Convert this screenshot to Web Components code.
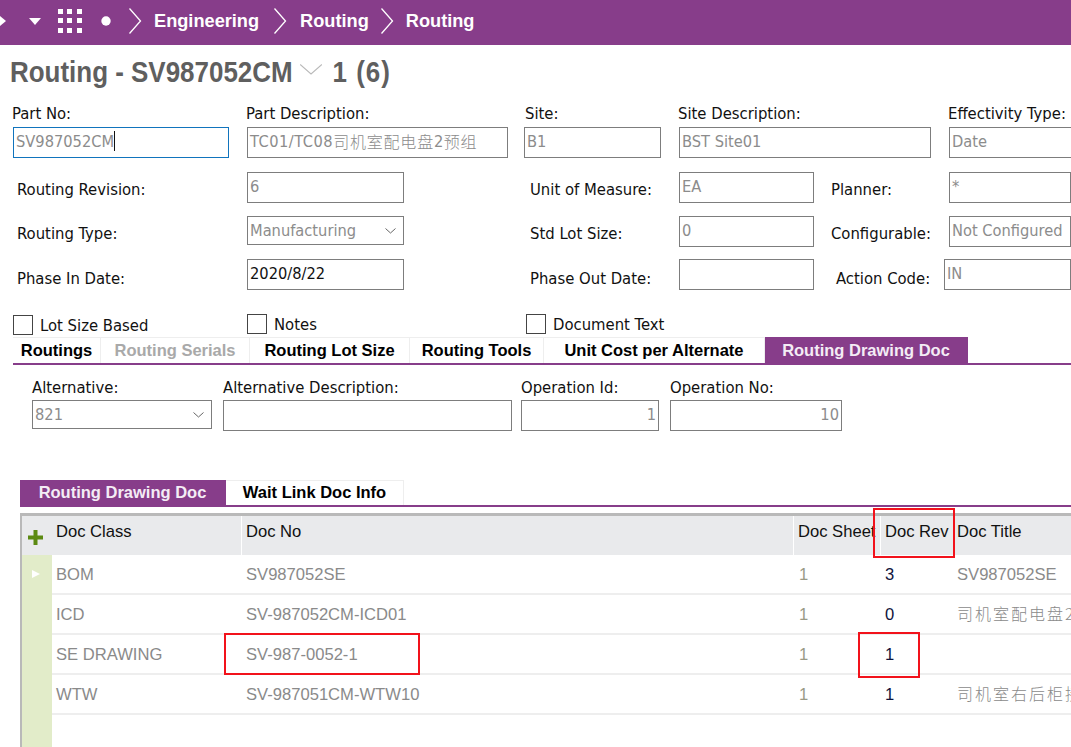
<!DOCTYPE html>
<html>
<head>
<meta charset="utf-8">
<title>Routing</title>
<style>
  html, body { margin: 0; padding: 0; background: #fff; }
  body { width: 1071px; height: 747px; overflow: hidden; font-family: "DejaVu Sans Condensed", "DejaVu Sans", "Noto Sans CJK SC", sans-serif; }
  .sheet { display: block; }
</style>
</head>
<body>
<div class="sheet">
  <app-header></app-header>
  <page-title></page-title>

  <form-row cols="234px 277px 155px 270px 200px" style="--label-gap:3px">
    <form-field label="Part No:" value="SV987052CM" focus label-x="-1" style="margin-right:18px"></form-field>
    <form-field label="Part Description:" value="TC01/TC08司机室配电盘2预组" label-x="-1" style="margin-right:16px"></form-field>
    <form-field label="Site:" value="B1" label-x="1" style="margin-right:18px"></form-field>
    <form-field label="Site Description:" value="BST Site01" label-x="-1" style="margin-right:18px"></form-field>
    <form-field label="Effectivity Type:" value="Date" label-x="-1"></form-field>
  </form-row>

  <form-grid>
    <field-label style="padding-left:17px">Routing Revision:</field-label>
    <text-box value="6"></text-box>
    <field-label style="padding-left:126px">Unit of Measure:</field-label>
    <text-box value="EA"></text-box>
    <field-label style="padding-left:17px">Planner:</field-label>
    <text-box value="*"></text-box>

    <field-label style="padding-left:17px">Routing Type:</field-label>
    <text-box value="Manufacturing" select h="29"></text-box>
    <field-label style="padding-left:126px">Std Lot Size:</field-label>
    <text-box value="0"></text-box>
    <field-label style="padding-left:17px">Configurable:</field-label>
    <text-box value="Not Configured"></text-box>

    <field-label style="padding-left:17px;--label-pad:9px">Phase In Date:</field-label>
    <text-box value="2020/8/22" dark></text-box>
    <field-label style="padding-left:126px;--label-pad:9px">Phase Out Date:</field-label>
    <text-box value=""></text-box>
    <field-label style="padding-left:22px;--label-pad:9px">Action Code:</field-label>
    <text-box value="IN" style="margin-left:-5px"></text-box>
  </form-grid>

  <check-row>
    <check-box style="width:234px">Lot Size Based</check-box>
    <check-box style="width:279px;margin-top:-1px">Notes</check-box>
    <check-box style="margin-top:-1px">Document Text</check-box>
  </check-row>

  <tab-strip inset="13" style="--tab-h:26px;--tab-pad:0px">
    <tab-item w="88">Routings</tab-item>
    <tab-item w="149" muted>Routing Serials</tab-item>
    <tab-item w="160">Routing Lot Size</tab-item>
    <tab-item w="134">Routing Tools</tab-item>
    <tab-item w="221">Unit Cost per Alternate</tab-item>
    <tab-item w="203" active>Routing Drawing Doc</tab-item>
  </tab-strip>

  <form-row cols="191px 298px 149px 172px" style="--row-left:32px;--label-gap:2px;margin-top:13px">
    <form-field label="Alternative:" value="821" select h="29" style="margin-right:11px"></form-field>
    <form-field label="Alternative Description:" value="" style="margin-right:9px"></form-field>
    <form-field label="Operation Id:" value="1" right style="margin-right:11px"></form-field>
    <form-field label="Operation No:" value="10" right></form-field>
  </form-row>

  <tab-strip inset="20" style="--tab-h:25px;margin-top:49px">
    <tab-item w="206" active>Routing Drawing Doc</tab-item>
    <tab-item w="178">Wait Link Doc Info</tab-item>
  </tab-strip>

  <data-grid></data-grid>
</div>

<script>
  class AppHeader extends HTMLElement {
    connectedCallback() {
      this.attachShadow({ mode: 'open' });
      const chevron = (m = 12) => `<svg style="margin-right:${m}px" width="14" height="28" viewBox="0 0 14 28"><path d="M1.5 1.5 L12.5 14 L1.5 26.5" fill="none" stroke="#fff" stroke-width="1.3"/></svg>`;
      this.shadowRoot.innerHTML = `
        <style>
          :host { display: block; height: 45px; background: #873d8a; overflow: hidden; }
          .bar { display: flex; align-items: center; box-sizing: border-box; height: 100%; padding-bottom: 3px; color: #fff;
                 font: bold 18.2px "Liberation Sans", Arial, sans-serif; }
          svg { display: block; flex: none; }
          span { margin-right: 14px; white-space: nowrap; }
        </style>
        <div class="bar">
          <svg width="6" height="10" viewBox="0 0 6 10" style="margin-right:23px"><path d="M0 0 L6 5 L0 10 Z" fill="#fff"/></svg>
          <svg width="12" height="7" viewBox="0 0 12 7" style="margin-right:17px"><path d="M0 0 H12 L6 7 Z" fill="#fff"/></svg>
          <svg width="24" height="24" viewBox="0 0 24 24" style="margin-right:19px" fill="#fff">
            <rect x="0" y="0" width="5" height="5"/><rect x="9" y="0" width="5" height="5"/><rect x="19" y="0" width="5" height="5"/>
            <rect x="0" y="9" width="5" height="5"/><rect x="9" y="9" width="5" height="5"/><rect x="19" y="9" width="5" height="5"/>
            <rect x="0" y="19" width="5" height="5"/><rect x="9" y="19" width="5" height="5"/><rect x="19" y="19" width="5" height="5"/>
          </svg>
          <svg width="10" height="10" viewBox="0 0 10 10" style="margin-right:17px"><circle cx="5" cy="5" r="4.7" fill="#fff"/></svg>
          ${chevron()}<span>Engineering</span>
          ${chevron(13)}<span style="margin-right:11px">Routing</span>
          ${chevron()}<span>Routing</span>
        </div>`;
    }
  }

  class PageTitle extends HTMLElement {
    connectedCallback() {
      this.attachShadow({ mode: 'open' });
      this.shadowRoot.innerHTML = `
        <style>
          :host { display: block; height: 59px; padding-left: 10px; color: #5f5f5f;
                  font: bold 30px "Liberation Sans", sans-serif; white-space: nowrap; }
          /* the reference title is a condensed face, none is installed */
          .t { display: flex; align-items: center; height: 54px; transform: scaleX(.865); transform-origin: left center; }
          svg { margin: 0 12px 6px 8px; }
          .n { letter-spacing: 1.2px; }
        </style>
        <div class="t">
          <span>Routing - SV987052CM</span>
          <svg width="26" height="11" viewBox="0 0 26 11"><path d="M.5.5 L13 10 L25.5.5" fill="none" stroke="#b9b9b9" stroke-width="1.2"/></svg>
          <span class="n">1 (6)</span>
        </div>`;
    }
  }

  class FieldLabel extends HTMLElement {
    connectedCallback() {
      this.attachShadow({ mode: 'open' });
      this.shadowRoot.innerHTML = `
        <style>
          :host { display: flex; align-items: center; box-sizing: border-box; padding-top: var(--label-pad, 0); color: #111;
                  font-size: 16.5px; line-height: 20px; white-space: nowrap; }
        </style>
        <slot></slot>`;
    }
  }

  class TextBox extends HTMLElement {
    connectedCallback() {
      this.attachShadow({ mode: 'open' });
      const val = this.getAttribute('value') || '';
      this.shadowRoot.innerHTML = `
        <style>
          :host { display: block; box-sizing: border-box; height: ${this.getAttribute('h') || 31}px; min-width: 0;
                  border: 1px solid ${this.hasAttribute('focus') ? '#1174bd' : '#7d7d7d'}; background: #fff; position: relative;
                  color: ${this.hasAttribute('dark') ? '#111' : '#8c8c8c'}; font-size: 16.3px; overflow: hidden; white-space: nowrap; }
          .v { display: flex; align-items: center; height: 26px; padding: 0 2px;
               justify-content: ${this.hasAttribute('right') ? 'flex-end' : 'flex-start'}; }
          .wide { letter-spacing: .5px; }
          .cjk { letter-spacing: .8px; font-size: 16px; font-family: "Noto Sans CJK SC", sans-serif; font-weight: 300; }
          .caret { width: 1px; height: 20px; background: #111; }
          svg { position: absolute; right: 7px; top: 11px; }
        </style>
        <div class="v"></div>
        ${this.hasAttribute('select') ? '<svg width="11" height="6" viewBox="0 0 11 6"><path d="M.5.5 L5.5 5 L10.5.5" fill="none" stroke="#666" stroke-width="1"/></svg>' : ''}`;
      const box = this.shadowRoot.querySelector('.v');
      // split latin and chinese runs
      const mixed = /[\u4e00-\u9fff]/.test(val);
      val.split(/([\u4e00-\u9fff]+)/).forEach(part => {
        if (!part) return;
        const s = document.createElement('span');
        s.textContent = part;
        if (/[\u4e00-\u9fff]/.test(part)) s.className = 'cjk';
        else if (mixed) s.className = 'wide';
        box.appendChild(s);
      });
      if (this.hasAttribute('focus')) {
        const c = document.createElement('span');
        c.className = 'caret';
        box.appendChild(c);
      }
    }
  }

  class FormField extends HTMLElement {
    connectedCallback() {
      this.attachShadow({ mode: 'open' });
      const flags = ['focus', 'select', 'right'].filter(f => this.hasAttribute(f)).join(' ');
      const lx = this.getAttribute('label-x') || 0;
      this.shadowRoot.innerHTML = `
        <style>
          :host { display: block; min-width: 0; }
          field-label { height: 20px; margin-bottom: var(--label-gap, 4px); margin-left: ${lx}px; }
        </style>
        <field-label>${this.getAttribute('label')}</field-label>
        <text-box value="${this.getAttribute('value') || ''}" h="${this.getAttribute('h') || 31}" ${flags}></text-box>`;
    }
  }

  class FormRow extends HTMLElement {
    connectedCallback() {
      this.attachShadow({ mode: 'open' });
      this.shadowRoot.innerHTML = `
        <style>
          :host { display: grid; grid-template-columns: ${this.getAttribute('cols')};
                  padding-left: var(--row-left, 13px); align-items: start; }
        </style>
        <slot></slot>`;
    }
  }

  class FormGrid extends HTMLElement {
    connectedCallback() {
      this.attachShadow({ mode: 'open' });
      this.shadowRoot.innerHTML = `
        <style>
          :host { display: grid; grid-template-columns: 247px 157px 275px 135px 135px 1fr;
                  grid-template-rows: 31px 30px 31px; row-gap: 13px; margin-top: 14px; --label-pad: 5px; }
        </style>
        <slot></slot>`;
    }
  }

  class CheckRow extends HTMLElement {
    connectedCallback() {
      this.attachShadow({ mode: 'open' });
      this.shadowRoot.innerHTML = `
        <style>
          :host { display: flex; padding-left: 13px; margin-top: 25px; height: 22px; }
        </style>
        <slot></slot>`;
    }
  }

  class CheckBox extends HTMLElement {
    connectedCallback() {
      this.attachShadow({ mode: 'open' });
      this.shadowRoot.innerHTML = `
        <style>
          :host { display: flex; align-items: center; gap: 7px; box-sizing: border-box; height: 20px; flex: none;
                  color: #111; font-size: 16.5px; white-space: nowrap; }
          i { display: block; box-sizing: border-box; width: 20px; height: 20px; border: 1px solid #444; background: #fff; }
        </style>
        <i></i><slot></slot>`;
    }
  }

  class TabStrip extends HTMLElement {
    connectedCallback() {
      this.attachShadow({ mode: 'open' });
      this.shadowRoot.innerHTML = `
        <style>
          :host { display: block; margin-left: ${this.getAttribute('inset')}px; }
          .tabs { display: flex; height: var(--tab-h, 26px); border-bottom: 2px solid #873d8a; }
        </style>
        <div class="tabs"><slot></slot></div>`;
    }
  }

  class TabItem extends HTMLElement {
    connectedCallback() {
      this.attachShadow({ mode: 'open' });
      const active = this.hasAttribute('active');
      const muted = this.hasAttribute('muted');
      this.shadowRoot.innerHTML = `
        <style>
          :host { display: flex; align-items: center; justify-content: center; box-sizing: border-box; flex: none;
                  width: ${this.getAttribute('w')}px; white-space: nowrap; padding-bottom: var(--tab-pad, 2px);
                  font: bold 16.5px "Liberation Sans", Arial, sans-serif;
                  color: ${active ? '#f4ecf5' : muted ? '#a9a9a9' : '#000'};
                  background: ${active ? '#873d8a' : '#fff'};
                  border-top: 1px solid ${active ? '#873d8a' : '#eee'};
                  border-right: 1px solid ${active ? '#873d8a' : '#eee'}; }
        </style>
        <slot></slot>`;
    }
  }

  const GRID_ROWS = [
    ['BOM', 'SV987052SE', '1', '3', 'SV987052SE'],
    ['ICD', 'SV-987052CM-ICD01', '1', '0', '司机室配电盘2预组'],
    ['SE DRAWING', 'SV-987-0052-1', '1', '1', ''],
    ['WTW', 'SV-987051CM-WTW10', '1', '1', '司机室右后柜接线']
  ];

  class DataGrid extends HTMLElement {
    connectedCallback() {
      this.attachShadow({ mode: 'open' });
      const row = (r, i) => `
        <div class="row">
          <div class="ind">${i === 0 ? '<svg width="8" height="8" viewBox="0 0 8 8"><path d="M0 0 L8 4 L0 8 Z" fill="#fff"/></svg>' : ''}</div>
          <div class="c">${r[0]}</div>
          <div class="c no">${r[1]}</div>
          <div class="c tan">${r[2]}</div>
          <div class="c rev">${r[3]}</div>
          <div class="c ${/[\u4e00-\u9fff]/.test(r[4]) ? 'cjk' : ''}">${r[4]}</div>
        </div>`;
      this.shadowRoot.innerHTML = `
        <style>
          :host { display: block; position: relative; height: 234px; margin: 6px 0 0 20px; box-sizing: border-box;
                  border-top: 3px solid #b9b9b9; border-left: 2px solid #b9b9b9;
                  font: 16.6px "Liberation Sans", Arial, sans-serif; color: #111; }
          .head, .row { display: grid; grid-template-columns: 30px 189px 552px 87px 73px 1fr; }
          .head { height: 39px; background: #e9eaec; }
          .head .h { display: flex; align-items: center; padding: 0 0 8px 4px; border-left: 1px solid #fff; white-space: nowrap; overflow: visible; }
          .head .h.first { border-left: 0; }
          .head .h.last { border-left: 0; padding-left: 4px; }
          .head .plus { display: flex; align-items: center; justify-content: center; padding: 4px 3px 0 0; }
          .row { height: 40px; }
          .ind { background: #e2ecc9; display: flex; align-items: center; justify-content: center; padding: 0 3px 2px 0; }
          .c { display: flex; align-items: center; padding: 2px 0 0 4px; color: #8a8a8a; border-bottom: 2px solid #eee; white-space: nowrap; overflow: hidden; box-sizing: border-box; }
          .no { padding-left: 5px; }
          .tan { padding-left: 6px; color: #9a9a86; }
          .rev { color: #10143c; padding-left: 5px; }
          .cjk { font-family: "Noto Sans CJK SC", sans-serif; font-weight: 300; letter-spacing: 2px; font-size: 16px; padding: 0 0 2px 4px; }
          .fill { height: 32px; width: 30px; background: #e2ecc9; }
          red-mark { position: absolute; }
        </style>
        <div class="head">
          <div class="plus"><svg width="15" height="15" viewBox="0 0 15 15"><path d="M5.5 0 H9.5 V5.5 H15 V9.5 H9.5 V15 H5.5 V9.5 H0 V5.5 H5.5 Z" fill="#5c8a12"/></svg></div>
          <div class="h first">Doc Class</div>
          <div class="h">Doc No</div>
          <div class="h">Doc Sheet</div>
          <div class="h">Doc Rev</div>
          <div class="h last">Doc Title</div>
        </div>
        ${GRID_ROWS.map(row).join('')}
        <div class="fill"></div>
        <red-mark style="left:851px;top:-8px;width:82px;height:50px"></red-mark>
        <red-mark style="left:202px;top:117px;width:196px;height:42px"></red-mark>
        <red-mark style="left:836px;top:116px;width:62px;height:46px"></red-mark>`;
    }
  }

  class RedMark extends HTMLElement {
    connectedCallback() {
      this.attachShadow({ mode: 'open' });
      this.shadowRoot.innerHTML = `
        <style>
          :host { display: block; box-sizing: border-box; border: 2px solid #f2121b; pointer-events: none; }
        </style>`;
    }
  }

  customElements.define('app-header', AppHeader);
  customElements.define('page-title', PageTitle);
  customElements.define('field-label', FieldLabel);
  customElements.define('text-box', TextBox);
  customElements.define('form-field', FormField);
  customElements.define('form-row', FormRow);
  customElements.define('form-grid', FormGrid);
  customElements.define('check-row', CheckRow);
  customElements.define('check-box', CheckBox);
  customElements.define('tab-strip', TabStrip);
  customElements.define('tab-item', TabItem);
  customElements.define('data-grid', DataGrid);
  customElements.define('red-mark', RedMark);
</script>
</body>
</html>
